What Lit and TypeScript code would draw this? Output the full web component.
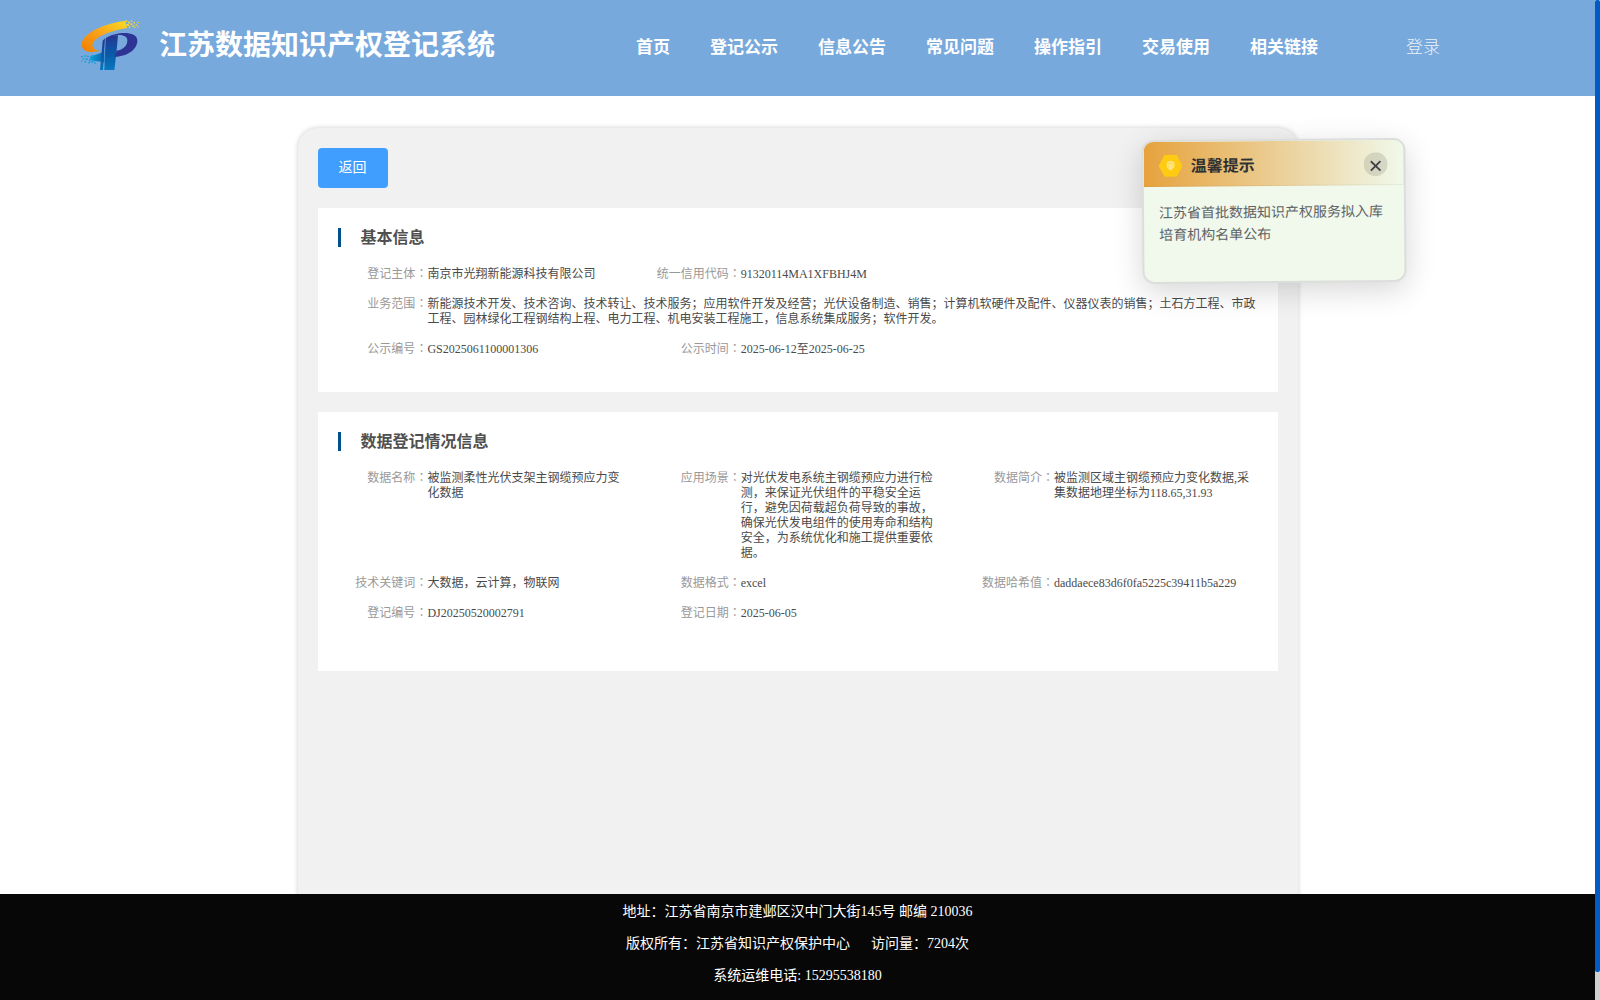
import { LitElement, html, css, svg } from "lit";
import { customElement, property } from "lit/decorators.js";

const FONT = css`"Liberation Serif", "Noto Sans CJK SC", serif`;

interface Field {
  label: string;
  value: string;
  wide?: boolean;
}

@customElement("site-logo")
class SiteLogo extends LitElement {
  static styles = css`
    :host { display: block; width: 80px; height: 70px; }
    .logo { display: block; width: 80px; height: 70px; }
  `;
  render() {
    const yellow = [[166, 31, 6], [174, 35, 6], [182, 31, 5], [170, 42, 7], [181, 40, 6], [190, 36, 5], [176, 49, 5], [187, 46, 6], [197, 43, 5], [203, 36, 4], [202, 49, 4], [193, 51, 4]];
    const blue = [[33, 138, 5], [42, 136, 5], [51, 137, 5], [59, 140, 6], [38, 145, 5], [47, 145, 6], [33, 152, 4], [56, 149, 6], [65, 136, 6], [44, 153, 5], [64, 153, 6], [72, 157, 5], [55, 156, 5]];
    return html`<svg class="logo" viewBox="0 0 240 210">
      <defs>
        <linearGradient id="sun" x1="0" y1="1" x2="1" y2="0">
          <stop offset="0" stop-color="#f07c00" /><stop offset=".5" stop-color="#f9a21b" /><stop offset="1" stop-color="#fddc20" />
        </linearGradient>
        <linearGradient id="stem" x1="0" y1="0" x2="0" y2="1">
          <stop offset="0" stop-color="#283591" /><stop offset=".5" stop-color="#0a58a8" /><stop offset="1" stop-color="#0877bd" />
        </linearGradient>
        <linearGradient id="wave" x1="0" y1="0" x2="1" y2="0">
          <stop offset="0" stop-color="#0ca0dc" /><stop offset="1" stop-color="#0a62ae" />
        </linearGradient>
      </defs>
      <path fill="url(#sun)" d="M165 33C98 41 35 72 35 104C35 118 48 126 66 126L92 123C68 120 62 108 72 94C88 74 126 62 172 54Z" />
      ${yellow.map(([x, y, s]) => svg`<rect x=${x} y=${y} width=${s} height=${s - 1} fill="#f7d334" />`)}
      <path fill="url(#wave)" d="M62 137C78 135 92 130 103 124V158C92 152 76 156 60 149Z" />
      ${blue.map(([x, y, s]) => svg`<rect x=${x} y=${y} width=${s} height=${s - 1} fill="#169bd7" />`)}
      <path fill="url(#stem)" d="M98 92L105 85L99 180H90Z" />
      <path fill="url(#stem)" d="M107 84C118 77 130 74 144 76L139 130L133 180H103Z" />
      <path fill="#2d3494" d="M112 82C140 65 202 62 202 92C202 120 168 140 134 140L140 122C160 120 173 105 172 90C171 76 152 73 136 76Z" />
    </svg>`;
  }
}

@customElement("site-header")
class SiteHeader extends LitElement {
  static styles = css`
    :host { display: block; }
    .bar { display: flex; align-items: flex-start; box-sizing: border-box; height: 96px; padding: 10px 0 0 70px; background: #78a9dd; color: #fff; }
    .name { flex: none; width: 476px; margin-left: 9px; font-size: 28px; font-weight: 700; line-height: 72px; white-space: nowrap; }
    .nav { display: flex; gap: 40px; margin-left: 1px; font-size: 17px; font-weight: 700; line-height: 76px; white-space: nowrap; }
    .login { margin-left: 88px; font-size: 17px; font-weight: 300; line-height: 76px; opacity: .85; }
  `;
  render() {
    const items = ["首页", "登记公示", "信息公告", "常见问题", "操作指引", "交易使用", "相关链接"];
    return html`<header class="bar">
      <site-logo></site-logo>
      <div class="name">江苏数据知识产权登记系统</div>
      <nav class="nav">${items.map((i) => html`<span>${i}</span>`)}</nav>
      <span class="login">登录</span>
    </header>`;
  }
}

@customElement("info-section")
class InfoSection extends LitElement {
  @property() heading = "";
  @property({ attribute: false }) fields: Field[] = [];

  static styles = css`
    :host { display: block; background: #fff; }
    .section { padding: 20px 0 35px 20px; }
    .tall { padding-bottom: 50px; }
    .title { height: 19px; padding-left: 19.5px; border-left: 3px solid #00508e; color: #505050; font-size: 16px; font-weight: 700; line-height: 19px; }
    .grid { display: grid; grid-template-columns: repeat(3, 1fr); row-gap: 15px; margin-top: 20px; font-size: 12px; line-height: 15px; }
    .field { display: flex; align-items: flex-start; padding-right: 24px; }
    .wide { grid-column: 1 / -1; padding-right: 20px; }
    .label { flex: none; display: flex; justify-content: flex-end; width: 89.4px; color: #999; white-space: nowrap; }
    .value { flex: 1; min-width: 0; color: #4a4a4a; }
    .colon { font-family: "Liberation Serif", "Noto Sans CJK TC", sans-serif; }
  `;
  render() {
    return html`<section class="section ${this.fields.length > 5 ? "tall" : ""}">
      <div class="title">${this.heading}</div>
      <div class="grid">
        ${this.fields.map((f) => html`<div class="field ${f.wide ? "wide" : ""}">
            <span class="label">${f.label}<span class="colon">：</span></span><span class="value">${f.value}</span>
          </div>`)}
      </div>
    </section>`;
  }
}

@customElement("tip-popup")
class TipPopup extends LitElement {
  static styles = css`
    :host { display: block; box-sizing: border-box; width: 264px; height: 144px; border: 2px solid #dcdedc; border-radius: 12px; overflow: hidden; background: #f0f9eb; box-shadow: 0 8px 30px rgba(0, 0, 0, .16); transform: rotate(-.45deg); }
    .head { display: flex; align-items: center; box-sizing: border-box; height: 45px; padding: 4px 16px 0 15px; background: linear-gradient(90deg, #e6a23c, #f0f9eb); border-bottom: 1px solid rgba(0, 0, 0, .05); }
    .icon { width: 24px; height: 22px; }
    .title { margin: 2px 0 0 8px; color: #303133; font-size: 16px; font-weight: 700; line-height: 24px; flex: 1; }
    .close { width: 24px; height: 24px; margin-top: -1px; }
    .text { margin: 0; padding: 16px 15px; color: #606266; font-size: 14px; line-height: 22px; }
  `;
  render() {
    return html`<div class="head">
        <svg class="icon" viewBox="0 0 24 22">
          <path d="M6 0H18L24 11L18 22H6L0 11Z" fill="#ffca12" />
          <circle cx="12" cy="10.3" r="3.5" fill="#ffdc5e" stroke="#ffe88f" stroke-width="1" />
          <path d="M10.4 9.6L12 11.4L13.6 9.6M12 11.4V13.4" stroke="#fff3bd" stroke-width=".8" fill="none" />
          <path d="M10.6 14.8H13.4" stroke="#ffe88f" stroke-width="1.2" />
        </svg>
        <span class="title">温馨提示</span>
        <svg class="close" viewBox="0 0 24 24">
          <circle cx="12" cy="12" r="12" fill="#000" fill-opacity=".11" />
          <path d="M7.2 9L16.8 18.4M16.8 9L7.2 18.4" stroke="#404144" stroke-width="1.8" fill="none" />
        </svg>
      </div>
      <p class="text">江苏省首批数据知识产权服务拟入库培育机构名单公布</p>`;
  }
}

@customElement("app-root")
class AppRoot extends LitElement {
  static styles = css`
    :host { display: block; position: relative; height: 1000px; overflow: hidden; font-family: ${FONT}; background: #fff; }
    .frame { display: grid; grid-template-columns: 1595px 5px; height: 1000px; }
    .page { display: flex; flex-direction: column; height: 1000px; min-width: 0; }
    .main { flex: 1; min-height: 0; overflow: hidden; padding: 32px 297px 0 298px; }
    .card { display: flex; flex-direction: column; align-items: stretch; gap: 20px; box-sizing: border-box; width: 1000px; height: 900px; padding: 20px; border-radius: 20px; background: #f1f1f1; box-shadow: 0 0 5px rgba(0, 0, 0, .2); }
    .back { align-self: flex-start; width: 70px; height: 40px; padding: 0 1px 0 0; border: 0; border-radius: 4px; background: #409eff; color: #fff; font: 14px/38px ${FONT}; }
    .footer { box-sizing: border-box; height: 106px; padding-top: 2px; background: #070707; color: #fff; font-size: 14px; line-height: 32px; text-align: center; white-space: pre; overflow: hidden; }
    .gap { display: inline-block; width: 21px; }
    .scroll { background: #d0d0d0; }
    .thumb { height: 972px; border-radius: 2px; background: #005bc7; }
    .tip { position: absolute; left: 1142px; top: 138.5px; }
  `;

  private basic: Field[] = [
    { label: "登记主体", value: "南京市光翔新能源科技有限公司" },
    { label: "统一信用代码", value: "91320114MA1XFBHJ4M" },
    { label: "业务范围", wide: true, value: "新能源技术开发、技术咨询、技术转让、技术服务；应用软件开发及经营；光伏设备制造、销售；计算机软硬件及配件、仪器仪表的销售；土石方工程、市政工程、园林绿化工程钢结构上程、电力工程、机电安装工程施工，信息系统集成服务；软件开发。" },
    { label: "公示编号", value: "GS2025061100001306" },
    { label: "公示时间", value: "2025-06-12至2025-06-25" },
  ];

  private data: Field[] = [
    { label: "数据名称", value: "被监测柔性光伏支架主钢缆预应力变化数据" },
    { label: "应用场景", value: "对光伏发电系统主钢缆预应力进行检测，来保证光伏组件的平稳安全运行，避免因荷载超负荷导致的事故，确保光伏发电组件的使用寿命和结构安全，为系统优化和施工提供重要依据。" },
    { label: "数据简介", value: "被监测区域主钢缆预应力变化数据,采集数据地理坐标为118.65,31.93" },
    { label: "技术关键词", value: "大数据，云计算，物联网" },
    { label: "数据格式", value: "excel" },
    { label: "数据哈希值", value: "daddaece83d6f0fa5225c39411b5a229" },
    { label: "登记编号", value: "DJ20250520002791" },
    { label: "登记日期", value: "2025-06-05" },
  ];

  render() {
    return html`<div class="frame">
        <div class="page">
          <site-header></site-header>
          <main class="main">
            <div class="card">
              <button class="back">返回</button>
              <info-section heading="基本信息" .fields=${this.basic}></info-section>
              <info-section heading="数据登记情况信息" .fields=${this.data}></info-section>
            </div>
          </main>
          <footer class="footer"><div>地址：江苏省南京市建邺区汉中门大街145号 邮编 210036</div><div>版权所有：江苏省知识产权保护中心<span class="gap"></span>访问量：7204次</div><div>系统运维电话: 15295538180</div></footer>
        </div>
        <div class="scroll"><div class="thumb"></div></div>
      </div>
      <tip-popup class="tip"></tip-popup>`;
  }
}
